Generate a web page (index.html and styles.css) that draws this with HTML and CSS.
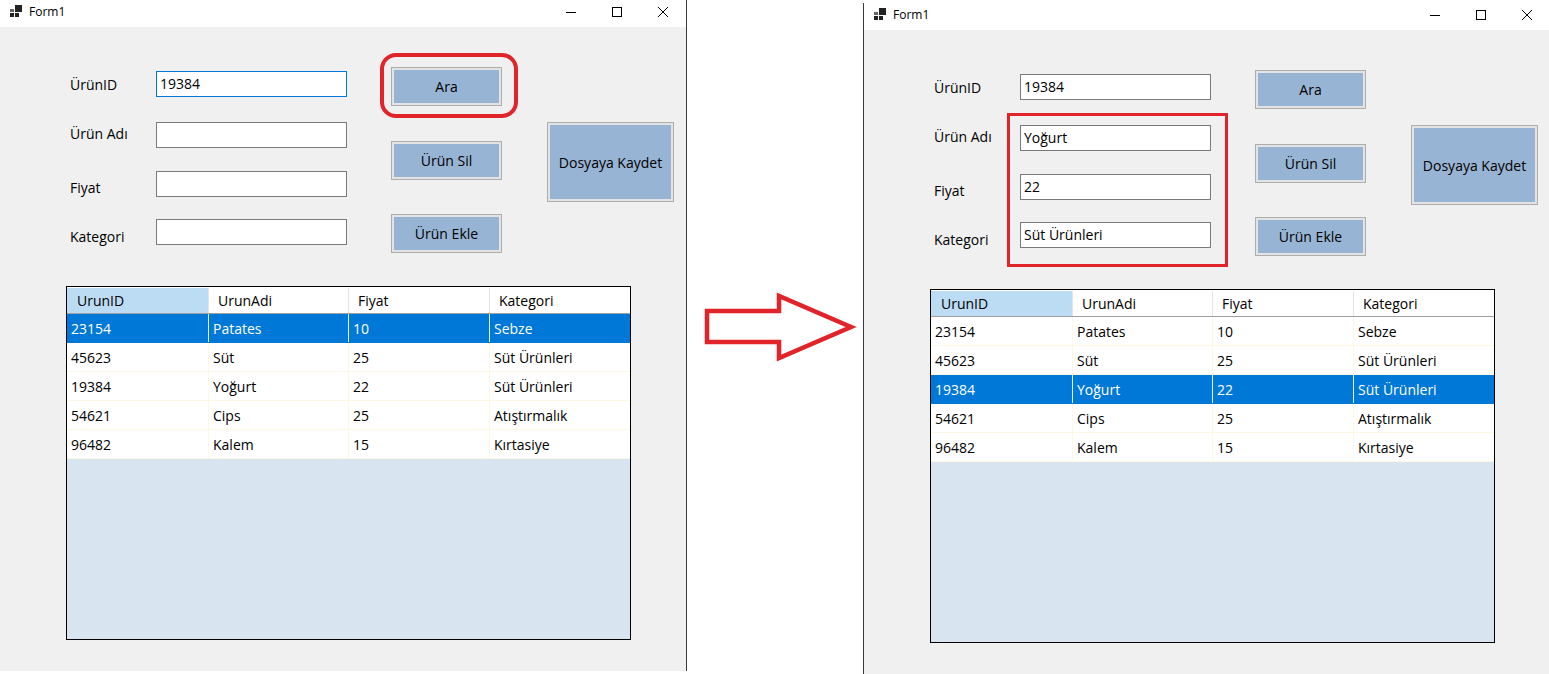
FILE: index.html
```html
<!DOCTYPE html>
<html lang="tr">
<head>
<meta charset="utf-8">
<title>Form1</title>
<link rel="stylesheet" href="styles.css">
</head>
<body>
<div class="desktop">

  <section class="window window--left">
    <header class="titlebar">
      <svg class="app-icon" width="12" height="12" viewBox="0 0 12 12"><rect x="0" y="4" width="4" height="3" fill="#666"/><rect x="0" y="8" width="4" height="4" fill="#222"/><rect x="5" y="0" width="7" height="7" fill="#222"/><rect x="5" y="8" width="4" height="4" fill="#222"/></svg>
      <span class="title">Form1</span>
      <div class="controls">
        <span class="ctl"><svg width="10" height="10" viewBox="0 0 10 10"><path d="M0 5.5H10" stroke="#000" stroke-width="1"/></svg></span>
        <span class="ctl"><svg width="10" height="10" viewBox="0 0 10 10"><rect x="0.5" y="0.5" width="9" height="9" fill="none" stroke="#000" stroke-width="1"/></svg></span>
        <span class="ctl"><svg width="10" height="10" viewBox="0 0 10 10"><path d="M0 0L10 10M10 0L0 10" stroke="#000" stroke-width="1"/></svg></span>
      </div>
    </header>
    <div class="client">
      <div class="form">
        <div class="labels">
          <span class="lbl">ÜrünID</span>
          <span class="lbl">Ürün Adı</span>
          <span class="lbl">Fiyat</span>
          <span class="lbl">Kategori</span>
        </div>
        <div class="inputs">
          <div class="tb tb--focus">19384</div>
          <div class="tb"></div>
          <div class="tb"></div>
          <div class="tb"></div>
        </div>
        <div class="buttons">
          <div class="btn">Ara</div>
          <div class="btn">Ürün Sil</div>
          <div class="btn">Ürün Ekle</div>
        </div>
        <div class="save">
          <div class="btn btn--big">Dosyaya Kaydet</div>
        </div>
      </div>
      <div class="grid">
        <div class="grid-head">
          <div class="hc hc--sel">UrunID</div>
          <div class="hc">UrunAdi</div>
          <div class="hc">Fiyat</div>
          <div class="hc">Kategori</div>
        </div>
        <div class="grid-row grid-row--sel"><div class="gc">23154</div><div class="gc">Patates</div><div class="gc">10</div><div class="gc">Sebze</div></div>
        <div class="grid-row"><div class="gc">45623</div><div class="gc">Süt</div><div class="gc">25</div><div class="gc">Süt Ürünleri</div></div>
        <div class="grid-row"><div class="gc">19384</div><div class="gc">Yoğurt</div><div class="gc">22</div><div class="gc">Süt Ürünleri</div></div>
        <div class="grid-row"><div class="gc">54621</div><div class="gc">Cips</div><div class="gc">25</div><div class="gc">Atıştırmalık</div></div>
        <div class="grid-row"><div class="gc">96482</div><div class="gc">Kalem</div><div class="gc">15</div><div class="gc">Kırtasiye</div></div>
      </div>
      <div class="mark mark--ara"></div>
    </div>
  </section>

  <svg class="arrow" width="160" height="75" viewBox="0 0 160 75"><polygon points="7,21 79,21 79,6 151,37 79,68 79,52 7,52" fill="none" stroke="#e1232a" stroke-width="4.5" stroke-linejoin="miter" stroke-miterlimit="10"/></svg>

  <section class="window window--right">
    <header class="titlebar">
      <svg class="app-icon" width="12" height="12" viewBox="0 0 12 12"><rect x="0" y="4" width="4" height="3" fill="#666"/><rect x="0" y="8" width="4" height="4" fill="#222"/><rect x="5" y="0" width="7" height="7" fill="#222"/><rect x="5" y="8" width="4" height="4" fill="#222"/></svg>
      <span class="title">Form1</span>
      <div class="controls">
        <span class="ctl"><svg width="10" height="10" viewBox="0 0 10 10"><path d="M0 5.5H10" stroke="#000" stroke-width="1"/></svg></span>
        <span class="ctl"><svg width="10" height="10" viewBox="0 0 10 10"><rect x="0.5" y="0.5" width="9" height="9" fill="none" stroke="#000" stroke-width="1"/></svg></span>
        <span class="ctl"><svg width="10" height="10" viewBox="0 0 10 10"><path d="M0 0L10 10M10 0L0 10" stroke="#000" stroke-width="1"/></svg></span>
      </div>
    </header>
    <div class="client">
      <div class="form">
        <div class="labels">
          <span class="lbl">ÜrünID</span>
          <span class="lbl">Ürün Adı</span>
          <span class="lbl">Fiyat</span>
          <span class="lbl">Kategori</span>
        </div>
        <div class="inputs">
          <div class="tb">19384</div>
          <div class="tb">Yoğurt</div>
          <div class="tb">22</div>
          <div class="tb">Süt Ürünleri</div>
        </div>
        <div class="buttons">
          <div class="btn">Ara</div>
          <div class="btn">Ürün Sil</div>
          <div class="btn">Ürün Ekle</div>
        </div>
        <div class="save">
          <div class="btn btn--big">Dosyaya Kaydet</div>
        </div>
      </div>
      <div class="grid">
        <div class="grid-head">
          <div class="hc hc--sel">UrunID</div>
          <div class="hc">UrunAdi</div>
          <div class="hc">Fiyat</div>
          <div class="hc">Kategori</div>
        </div>
        <div class="grid-row"><div class="gc">23154</div><div class="gc">Patates</div><div class="gc">10</div><div class="gc">Sebze</div></div>
        <div class="grid-row"><div class="gc">45623</div><div class="gc">Süt</div><div class="gc">25</div><div class="gc">Süt Ürünleri</div></div>
        <div class="grid-row grid-row--sel"><div class="gc">19384</div><div class="gc">Yoğurt</div><div class="gc">22</div><div class="gc">Süt Ürünleri</div></div>
        <div class="grid-row"><div class="gc">54621</div><div class="gc">Cips</div><div class="gc">25</div><div class="gc">Atıştırmalık</div></div>
        <div class="grid-row"><div class="gc">96482</div><div class="gc">Kalem</div><div class="gc">15</div><div class="gc">Kırtasiye</div></div>
      </div>
      <div class="mark mark--fields"></div>
    </div>
  </section>

</div>
</body>
</html>
```

FILE: styles.css
```css
* { box-sizing: border-box; }

html, body { margin: 0; padding: 0; }

body {
  width: 1549px;
  height: 674px;
  overflow: hidden;
  background: #fff;
  font-family: "Open Sans", "Noto Sans", sans-serif;
  color: #000;
}

.desktop {
  position: relative;
  width: 1549px;
  height: 674px;
}

/* ---------- window frame ---------- */
.window {
  position: absolute;
  width: 688px;
  height: 671px;
  display: flex;
  flex-direction: column;
  border-left: 1px solid #3a3a3a;
  border-right: 1px solid #3a3a3a;
  background: #fff;
}
.window--left { left: -1px; top: 0; }
.window--right { left: 863px; top: 3px; }

.titlebar {
  height: 27px;
  flex: none;
  display: flex;
  align-items: flex-start;
  padding: 4px 0 0 10px;
  background: #fff;
}
.app-icon { margin-top: 1px; margin-right: 7px; flex: none; }
.title { font-size: 12px; line-height: 16px; }
.controls {
  margin-left: auto;
  display: flex;
}
.ctl {
  width: 46px;
  height: 15px;
  display: flex;
  align-items: center;
  justify-content: center;
}
.ctl svg { display: block; }

.client {
  position: relative;
  flex: 1;
  background: #f0f0f0;
}

/* ---------- form ---------- */
.form {
  display: flex;
  height: 259px;
  padding-left: 70px;
  font-size: 14px;
}
.labels {
  width: 86px;
  display: flex;
  flex-direction: column;
  padding-top: 48px;
}
.lbl { height: 20px; line-height: 20px; white-space: nowrap; }
.lbl:nth-child(2) { margin-top: 29px; }
.lbl:nth-child(3) { margin-top: 34px; }
.lbl:nth-child(4) { margin-top: 29px; }

.inputs {
  width: 191px;
  display: flex;
  flex-direction: column;
  padding-top: 44px;
}
.tb {
  height: 26px;
  border: 1px solid #7a7a7a;
  background: #fff;
  line-height: 24px;
  padding-left: 3px;
  white-space: nowrap;
}
.tb--focus { border-color: #0078d7; }
.tb:nth-child(2) { margin-top: 25px; }
.tb:nth-child(3) { margin-top: 23px; }
.tb:nth-child(4) { margin-top: 22px; }

.buttons {
  width: 111px;
  margin-left: 44px;
  display: flex;
  flex-direction: column;
  padding-top: 40px;
}
.btn {
  height: 39px;
  border: 1px solid #adadad;
  box-shadow: inset 0 0 0 2px #e3e3e3;
  background: #98b4d4;
  display: flex;
  align-items: center;
  justify-content: center;
  white-space: nowrap;
}
.buttons .btn:nth-child(2) { margin-top: 35px; }
.buttons .btn:nth-child(3) { margin-top: 34px; }

.save {
  width: 127px;
  margin-left: 45px;
  padding-top: 95px;
}
.btn--big { height: 80px; }

/* ---------- data grid ---------- */
.grid {
  margin-left: 66px;
  width: 565px;
  height: 354px;
  border: 1px solid #000;
  background: #d8e4f0;
  font-size: 14px;
}
.grid-head,
.grid-row {
  display: grid;
  grid-template-columns: 142px 140px 141px 140px;
}
.grid-head {
  background: #fff;
  padding-top: 1px;
  border-bottom: 1px solid #a0a0a0;
}
.hc {
  height: 25px;
  line-height: 26px;
  padding-left: 9px;
  border-right: 1px solid #e4e4e4;
}
.hc:last-child { border-right: none; }
.hc--sel { background: #bcdcf4; padding-left: 10px; }

.grid-row {
  height: 29px;
  background: #fff;
  border-bottom: 1px solid #fcf8e4;
}
.gc {
  height: 28px;
  line-height: 30px;
  padding-left: 4px;
  border-right: 1px solid #fcf8e4;
  white-space: nowrap;
  overflow: hidden;
}
.gc:last-child { border-right: none; }
.grid-row--sel { background: #0078d7; color: #fff; border-bottom-color: #0078d7; }
.grid-row--sel .gc { border-right-color: #e8f0f8; }
.grid-row--sel .gc:last-child { border-right: none; }

/* ---------- annotations ---------- */
.mark {
  position: absolute;
  border-color: #e1232a;
  border-style: solid;
}
.mark--ara {
  left: 380px;
  top: 26px;
  width: 138px;
  height: 65px;
  border-width: 4px;
  border-radius: 16px;
}
.mark--fields {
  left: 143px;
  top: 83px;
  width: 221px;
  height: 154px;
  border-width: 3px;
}

.arrow {
  position: absolute;
  left: 700px;
  top: 290px;
}
```
